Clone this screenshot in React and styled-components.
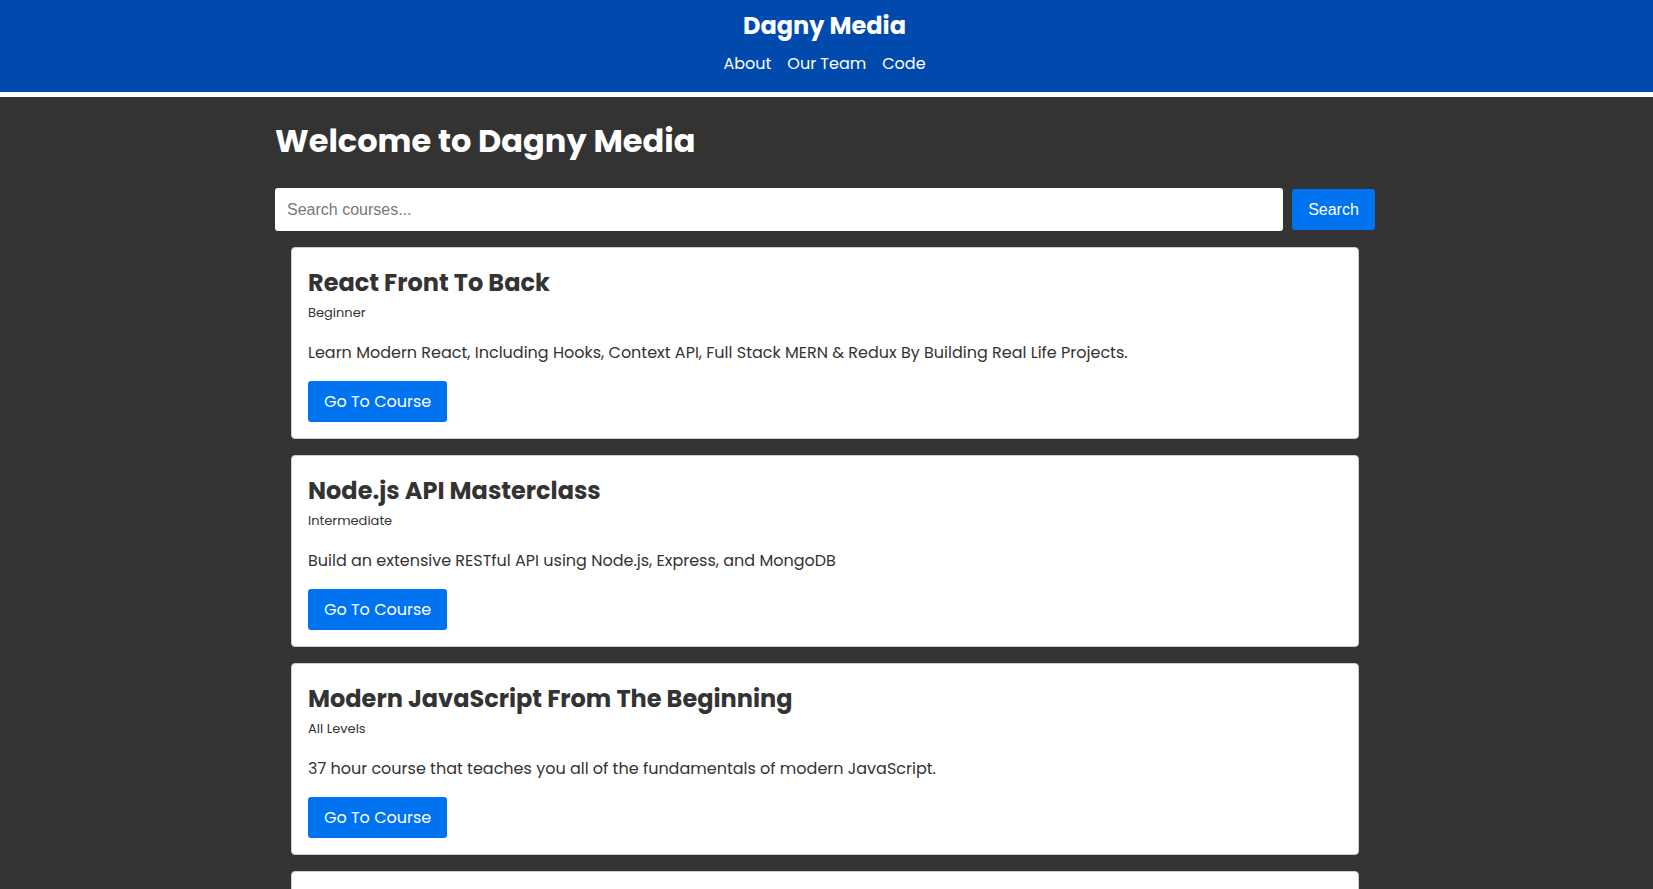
import React from "react"
import styled, { createGlobalStyle } from "styled-components"

const GlobalStyle = createGlobalStyle`
  * { box-sizing: border-box; }
  body {
    margin: 0;
    background: #333;
    font-family: Poppins, Inter, "Open Sans", sans-serif;
    color: #333;
  }
`

const Header = styled.header`
  background: #0049ad;
  border-bottom: 5px solid #fff;
  color: #fff;
  text-align: center;
  padding: 10px 4px 16px 0;
`

const Brand = styled.h1`
  margin: 0;
  font-size: 24px;
  line-height: 32px;
  font-weight: 700;
`

const Nav = styled.nav`
  display: flex;
  justify-content: center;
  gap: 16px;
  margin-top: 10px;
  a {
    color: #fff;
    text-decoration: none;
    font-size: 16px;
    line-height: 24px;
  }
`

const Container = styled.main`
  max-width: 1103px;
  margin: 0 auto;
  padding: 22px 3px 0 0;
`

const Title = styled.h2`
  margin: 0 0 25px;
  color: #fff;
  font-size: 32px;
  line-height: 44px;
  font-weight: 700;
`

const SearchForm = styled.form`
  display: flex;
  gap: 9px;
  margin-bottom: 16px;
`

const SearchInput = styled.input`
  flex: 1;
  height: 43px;
  border: none;
  border-radius: 3px;
  padding: 0 12px;
  font-family: "Liberation Sans", Arial, sans-serif;
  font-size: 16px;
  &::placeholder { color: #777; }
`

const Button = styled.button`
  background: #0073f0;
  color: #fff;
  border: none;
  border-radius: 3px;
  height: 41px;
  padding: 0 16px;
  font-family: ${p => (p.plain ? '"Liberation Sans", Arial, sans-serif' : 'Poppins, Inter, "Open Sans", sans-serif')};
  font-size: 16px;
  cursor: pointer;
`

const SearchButton = styled(Button)`
  width: 83px;
  margin-top: 1px;
`

const CardList = styled.div`
  display: flex;
  flex-direction: column;
  gap: 16px;
  padding: 0 16px;
`

const Card = styled.article`
  background: #fff;
  border: 1px solid #ccc;
  border-radius: 4px;
  padding: 17px 16px 16px;
  height: 192px;
`

const CardTitle = styled.h3`
  margin: 0;
  font-size: 24px;
  line-height: 36px;
  font-weight: 700;
`

const Level = styled.small`
  display: block;
  font-size: 13px;
  line-height: 20px;
  margin-top: 2px;
`

const Desc = styled.p`
  margin: 18px 0 16px;
  font-size: 16px;
  line-height: 24px;
`

const courses = [
  {
    title: "React Front To Back",
    level: "Beginner",
    desc: "Learn Modern React, Including Hooks, Context API, Full Stack MERN & Redux By Building Real Life Projects.",
  },
  {
    title: "Node.js API Masterclass",
    level: "Intermediate",
    desc: "Build an extensive RESTful API using Node.js, Express, and MongoDB",
  },
  {
    title: "Modern JavaScript From The Beginning",
    level: "All Levels",
    desc: "37 hour course that teaches you all of the fundamentals of modern JavaScript.",
  },
  {
    title: "Python Django Dev To Deployment",
    level: "Intermediate",
    desc: "Build a real estate application with Django and deploy it.",
  },
]

export default function App() {
  return (
    <>
      <GlobalStyle />
      <Header>
        <Brand>Dagny Media</Brand>
        <Nav>
          <a href="#about">About</a>
          <a href="#team">Our Team</a>
          <a href="#code">Code</a>
        </Nav>
      </Header>
      <Container>
        <Title>Welcome to Dagny Media</Title>
        <SearchForm onSubmit={e => e.preventDefault()}>
          <SearchInput type="text" placeholder="Search courses..." />
          <SearchButton plain type="submit">Search</SearchButton>
        </SearchForm>
        <CardList>
          {courses.map(c => (
            <Card key={c.title}>
              <CardTitle>{c.title}</CardTitle>
              <Level>{c.level}</Level>
              <Desc>{c.desc}</Desc>
              <Button type="button">Go To Course</Button>
            </Card>
          ))}
        </CardList>
      </Container>
    </>
  )
}
